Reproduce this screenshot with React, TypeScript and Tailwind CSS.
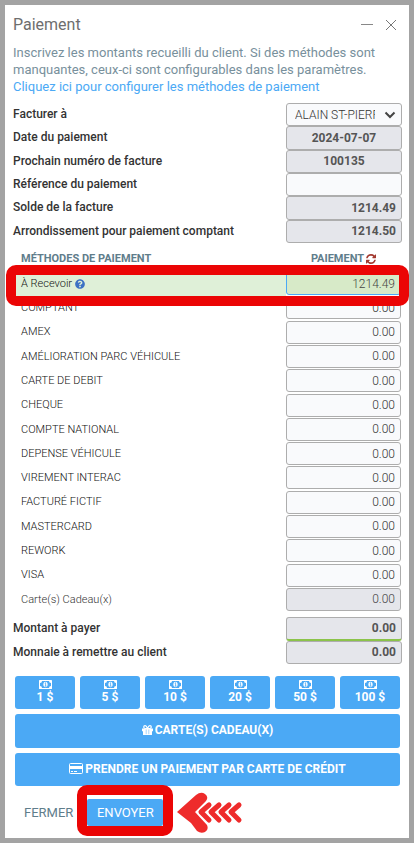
import React from "react";
import { FaQuestionCircle } from "react-icons/fa";

const FIELD =
  "block h-full w-[116px] rounded-[3px] border border-[#adadad] px-[5px] text-xs text-[#555] outline-none";

const METHOD_FIELD =
  "block h-[23px] w-full rounded-[3px] border px-[5px] text-right text-xs font-light outline-none";

type SummaryField = {
  id: string;
  label: string;
  value: string;
  look: string;
  readOnly?: boolean;
};

const INVOICE_FIELDS: SummaryField[] = [
  { id: "date", label: "Date du paiement", value: "2024-07-07", look: "bg-[#e5e6eb] text-center font-bold", readOnly: true },
  { id: "number", label: "Prochain numéro de facture", value: "100135", look: "bg-[#e5e6eb] text-center font-bold", readOnly: true },
  { id: "reference", label: "Référence du paiement", value: "", look: "bg-[#f9fafc] text-left" },
  { id: "balance", label: "Solde de la facture", value: "1214.49", look: "bg-[#e5e6eb] text-right font-bold", readOnly: true },
  { id: "rounded", label: "Arrondissement pour paiement comptant", value: "1214.50", look: "bg-[#e5e6eb] text-right font-bold", readOnly: true },
];

const TOTAL_FIELDS: SummaryField[] = [
  { id: "due", label: "Montant à payer", value: "0.00", look: "border-b-2 border-b-[#8bc34a] bg-[#e5e6eb] text-right font-bold", readOnly: true },
  { id: "change", label: "Monnaie à remettre au client", value: "0.00", look: "bg-[#e5e6eb] text-right font-bold", readOnly: true },
];

const METHODS = [
  "COMPTANT",
  "AMEX",
  "AMÉLIORATION PARC VÉHICULE",
  "CARTE DE DEBIT",
  "CHEQUE",
  "COMPTE NATIONAL",
  "DEPENSE VÉHICULE",
  "VIREMENT INTERAC",
  "FACTURÉ FICTIF",
  "MASTERCARD",
  "REWORK",
  "VISA",
];

const BILLS = ["1 $", "5 $", "10 $", "20 $", "50 $", "100 $"];

function SummaryRow({ field }: { field: SummaryField }) {
  return (
    <div className="flex justify-between">
      <label htmlFor={field.id} className="text-xs leading-[22px] font-medium text-[#333]">
        {field.label}
      </label>
      <input id={field.id} defaultValue={field.value} readOnly={field.readOnly} className={`${FIELD} ${field.look}`} />
    </div>
  );
}

function RefreshIcon() {
  return (
    <svg viewBox="0 0 1536 1536" className="h-[10px] w-[10px]" fill="#a33a30" aria-hidden="true">
      <path d="M1511 928q0 5-1 7-64 268-268 434.5t-478 166.5q-146 0-282.5-55t-243.5-157l-129 129q-19 19-45 19t-45-19-19-45v-448q0-26 19-45t45-19h448q26 0 45 19t19 45-19 45l-137 137q71 66 161 102t187 36q134 0 250-65t186-179q11-17 53-117 8-23 30-23h192q13 0 22.5 9.5t9.5 22.5zm25-800v448q0 26-19 45t-45 19h-448q-26 0-45-19t-19-45 19-45l138-138q-148-137-349-137-134 0-250 65t-186 179q-11 17-53 117-8 23-30 23h-199q-13 0-22.5-9.5t-9.5-22.5v-7q65-268 270-434.5t480-166.5q146 0 284 55.5t245 156.5l130-129q19-19 45-19t45 19 19 45z" />
    </svg>
  );
}

function BillIcon() {
  return (
    <svg viewBox="0 0 13 9" className="h-[9px] w-[13px]" aria-hidden="true">
      <rect width="13" height="9" rx="0.6" fill="#fff" />
      <path d="M3 1h7a2 2 0 0 0 2 2v3a2 2 0 0 0-2 2H3a2 2 0 0 0-2-2V3a2 2 0 0 0 2-2z" fill="#4ba9f5" />
      <ellipse cx="6.5" cy="4.5" rx="2.1" ry="2.8" fill="#fff" />
      <path d="M5.8 3.3l.8-.6v3.4M5.6 6.2h2" stroke="#4ba9f5" strokeWidth="0.8" fill="none" />
    </svg>
  );
}

function GiftIcon() {
  return (
    <svg viewBox="0 0 11 10" className="h-[10px] w-[11px]" aria-hidden="true">
      <path d="M0 3.500h11v2.700h-1V9.400q0 .6-.6.6H1.600Q1 10 1 9.400V6.200H0z" fill="#fff" />
      <path d="M5.500 3.500C4.700 1.600 4 .7 3.100.7a1.300 1.300 0 0 0 0 2.800zM5.500 3.500C6.300 1.600 7 .7 7.900.7a1.300 1.300 0 0 1 0 2.800z" fill="none" stroke="#fff" strokeWidth="1.2" />
      <path d="M4.200 4.500v4.700M6.800 4.500v4.700" stroke="#4ba9f5" strokeWidth="0.5" />
    </svg>
  );
}

function CardIcon() {
  return (
    <svg viewBox="0 0 14 11" className="h-[11px] w-[14px]" aria-hidden="true">
      <rect x="0.5" y="0.5" width="13" height="10" rx="1" fill="none" stroke="#fff" />
      <path d="M0 3h14v3H0zM2 8h2v1H2zM5 8h3v1H5z" fill="#fff" />
    </svg>
  );
}

function ArrowTrail() {
  return (
    <svg viewBox="0 0 66 42" className="h-[42px] w-[66px]" fill="none" stroke="#ee2b2b" strokeLinecap="round" strokeLinejoin="round" aria-hidden="true">
      <path d="M0 20L19 3Q24-1 28 2T29 9L18 20l12 13q2 5-2 7t-8-1L14 31z" fill="#ee2b2b" stroke="none" />
      <path d="M32 13l-8 7 8 8" strokeWidth="5" />
      <path d="M42 13l-8 7 8 8" strokeWidth="5" />
      <path d="M52 13l-8 7 8 8" strokeWidth="5" />
      <path d="M62 13l-8 7 8 8" strokeWidth="5" />
    </svg>
  );
}

export default function App() {
  return (
    <main className="border-[5px] border-[#a3a3a3] bg-white font-['Roboto','Liberation_Sans',sans-serif] text-[#333]">
      <header className="flex items-center justify-between px-2 pt-2">
        <h1 className="text-base leading-6 text-[#6e6e6e]">Paiement</h1>
        <div className="flex gap-3 pr-1">
          <button type="button" aria-label="Réduire">
            <svg viewBox="0 0 12 12" className="h-3 w-3" stroke="#888" aria-hidden="true">
              <path d="M0 5.5h12" />
            </svg>
          </button>
          <button type="button" aria-label="Fermer la fenêtre">
            <svg viewBox="0 0 12 12" className="h-3 w-3" stroke="#777" aria-hidden="true">
              <path d="M1 1l10 10M11 1L1 11" />
            </svg>
          </button>
        </div>
      </header>

      <p className="px-2 pt-[7px] text-[13px] leading-[17px] text-[#78909c]">
        Inscrivez les montants recueilli du client. Si des méthodes sont
        <br />
        manquantes, ceux-ci sont configurables dans les paramètres.
        <br />
        <a href="#methodes" className="text-[#4ba9f5]">
          Cliquez ici pour configurer les méthodes de paiement
        </a>
      </p>

      <form onSubmit={(event) => event.preventDefault()}>
        <section className="mt-2 grid h-[140px] auto-rows-fr pr-[7px] pl-2">
          <div className="flex justify-between">
            <label htmlFor="payer" className="text-xs leading-[22px] font-medium">
              Facturer à
            </label>
            <div className="relative">
              <select id="payer" className="block h-full w-[116px] appearance-none rounded-[3px] border border-[#adadad] bg-[#f9fafc] pr-[26px] pl-2 text-xs font-light text-[#333]">
                <option>ALAIN ST-PIERRE</option>
              </select>
              <svg viewBox="0 0 12 8" className="pointer-events-none absolute top-2 right-[6px] h-2 w-3" fill="none" stroke="#444" strokeWidth="2" aria-hidden="true">
                <path d="M1.500 1.500L6 6l4.500-4.500" />
              </svg>
            </div>
          </div>
          {INVOICE_FIELDS.map((field) => (
            <SummaryRow key={field.id} field={field} />
          ))}
        </section>

        <section className="relative mt-[5px] pr-2 pl-[11px]">
          <table className="h-[364px] w-full border-collapse text-[11px] font-light text-[#111]">
            <thead>
              <tr className="h-6 text-[#607d8b]">
                <th scope="col" className="p-0 pb-[2px] pl-[5px] text-left font-bold">
                  MÉTHODES DE PAIEMENT
                </th>
                <th scope="col" className="w-[115px] p-0 pb-[2px] font-bold">
                  <span className="flex items-center justify-center gap-[2px]">
                    PAIEMENT
                    <button type="button" aria-label="Actualiser">
                      <RefreshIcon />
                    </button>
                  </span>
                </th>
              </tr>
            </thead>
            <tbody>
              <tr>
                <td className="bg-[#dff0d8] p-0 pl-[5px]">
                  <label htmlFor="receivable" className="flex items-center gap-[3px]">
                    À Recevoir <FaQuestionCircle className="h-[10px] w-[10px] text-[#3c72c4]" />
                  </label>
                </td>
                <td className="w-[115px] p-0 pb-px">
                  <input id="receivable" defaultValue="1214.49" className={`${METHOD_FIELD} border-[#4ba9f5] bg-[#d7eac8] text-[#444]`} />
                </td>
              </tr>
              {METHODS.map((name) => (
                <tr key={name}>
                  <td className="p-0 pl-[5px]">
                    <label htmlFor={name}>{name}</label>
                  </td>
                  <td className="w-[115px] p-0 pb-px">
                    <input id={name} defaultValue="0.00" className={`${METHOD_FIELD} border-[#adadad] bg-[#f9fafc] text-[#333]`} />
                  </td>
                </tr>
              ))}
              <tr>
                <td className="p-0 pl-[5px] text-[#333]">
                  <label htmlFor="gift">Carte(s) Cadeau(x)</label>
                </td>
                <td className="w-[115px] p-0 pb-px">
                  <input id="gift" readOnly defaultValue="0.00" className={`${METHOD_FIELD} border-[#adadad] bg-[#e5e6eb] text-[#444]`} />
                </td>
              </tr>
            </tbody>
          </table>
          <div className="pointer-events-none absolute top-[17px] right-0 left-px h-[41px] rounded-[10px] border-[10px] border-[#eb0505]" />
        </section>

        <section className="mt-[5px] grid h-[47px] auto-rows-fr pr-[7px] pl-2">
          {TOTAL_FIELDS.map((field) => (
            <SummaryRow key={field.id} field={field} />
          ))}
        </section>

        <section className="mt-3 grid grid-cols-6 gap-[5px] pr-[9px] pl-[10px] text-xs font-bold text-white">
          {BILLS.map((bill) => (
            <button key={bill} type="button" className="flex h-[33px] flex-col items-center justify-center rounded-[3px] bg-[#4ba9f5] leading-4">
              <BillIcon />
              {bill}
            </button>
          ))}
          <button type="button" className="col-span-6 flex h-[34px] items-center justify-center gap-[2px] rounded-[3px] bg-[#4ba9f5] pb-[2px]">
            <GiftIcon />
            CARTE(S) CADEAU(X)
          </button>
          <button type="button" className="col-span-6 flex h-[33px] items-center justify-center gap-[2px] rounded-[3px] bg-[#4ba9f5] pb-[2px]">
            <CardIcon />
            PRENDRE UN PAIEMENT PAR CARTE DE CRÉDIT
          </button>
        </section>

        <footer className="flex items-center gap-[14px] pt-[13px] pb-3 pl-[19px] text-[13px]">
          <button type="button" className="text-[#607d8b]">
            FERMER
          </button>
          <div className="relative">
            <button type="submit" className="h-[27px] w-[76px] rounded-[2px] bg-[#4ba9f5] text-white">
              ENVOYER
            </button>
            <div className="pointer-events-none absolute -inset-x-[10px] -top-[14px] -bottom-[10px] rounded-[10px] border-[10px] border-[#eb0505]" />
            <div className="pointer-events-none absolute -top-[7px] left-[90px]">
              <ArrowTrail />
            </div>
          </div>
        </footer>
      </form>
    </main>
  );
}
